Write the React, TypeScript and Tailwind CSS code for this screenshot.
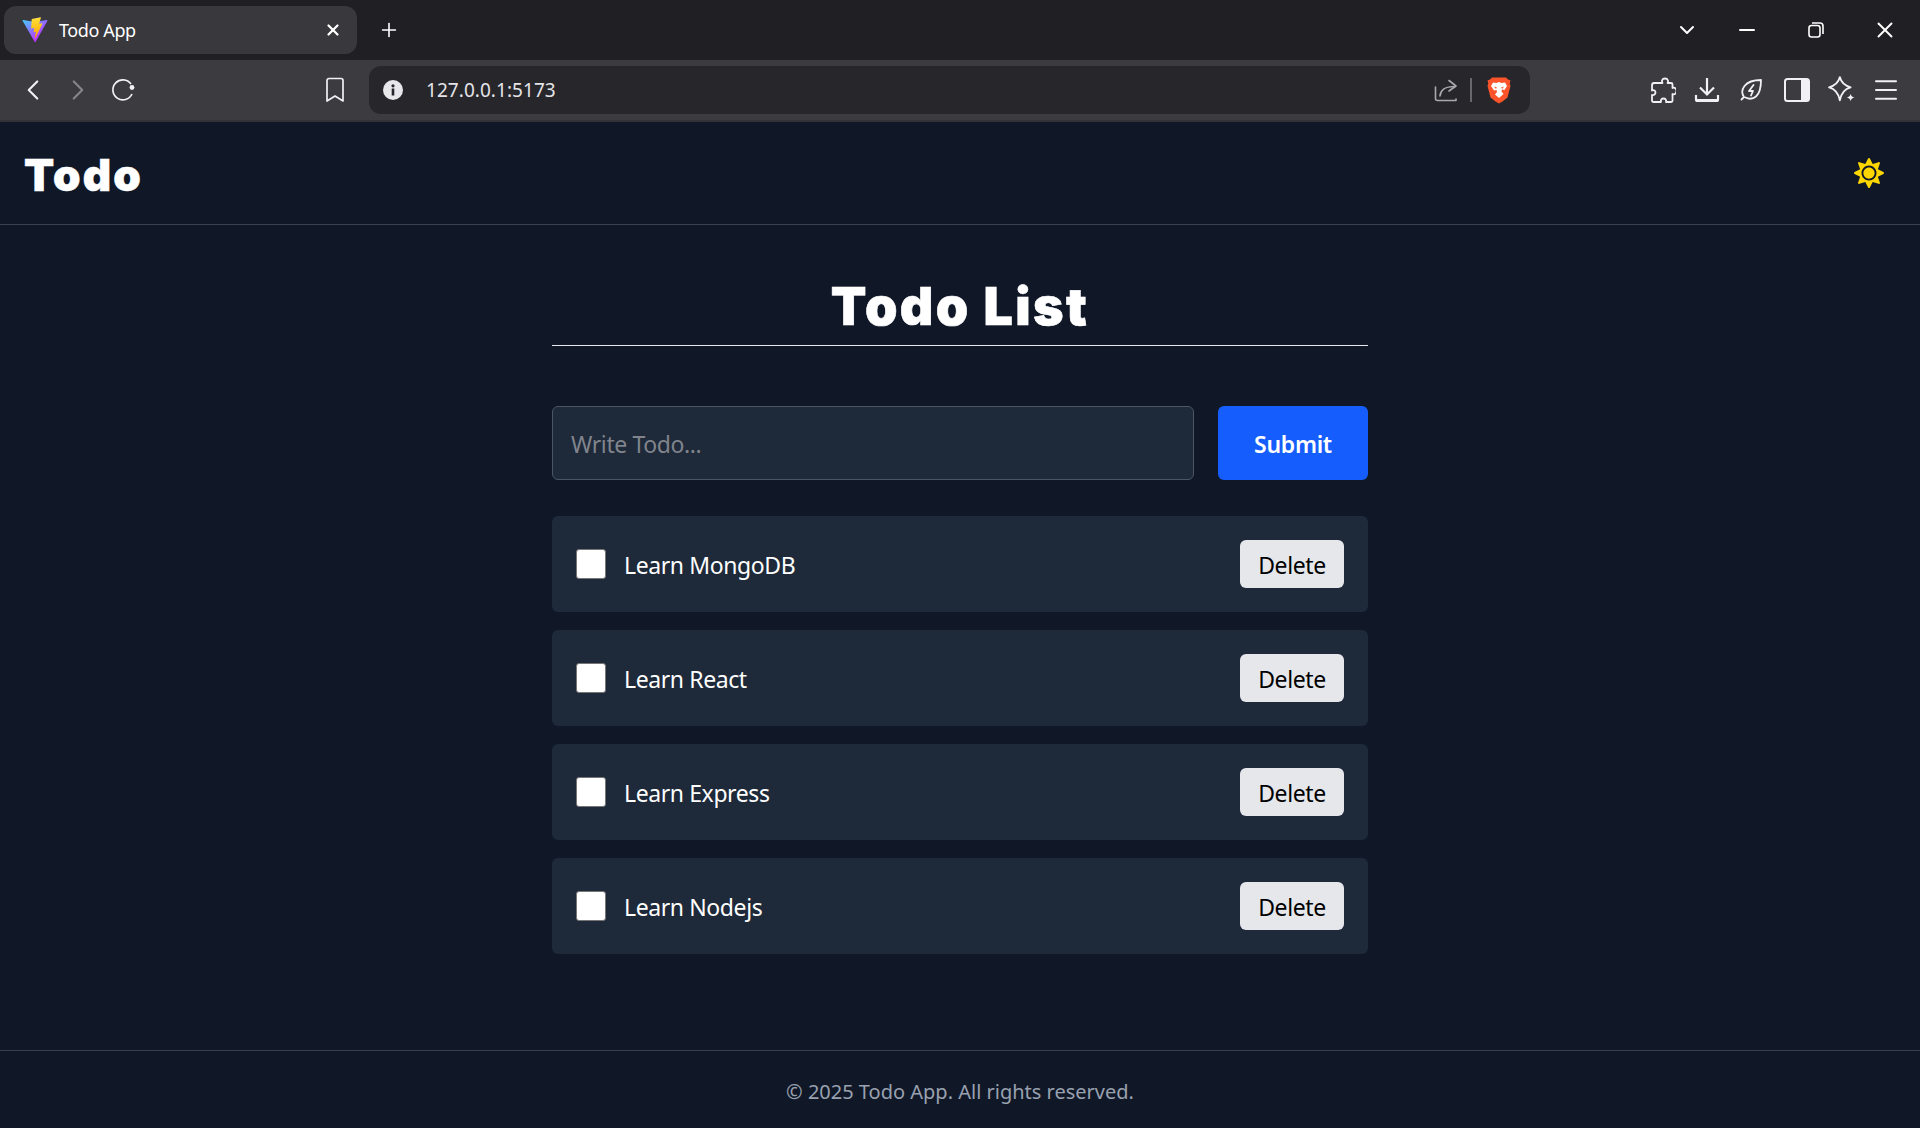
import React from 'react';
import { FaSun } from 'react-icons/fa';
import { ChevronLeft, ChevronRight, Plus, X, ChevronDown, Minus, Menu } from 'lucide-react';

const todos = ['Learn MongoDB', 'Learn React', 'Learn Express', 'Learn Nodejs'];

function ViteLogo() {
  return (
    <svg width="26" height="26" viewBox="0 0 410 404" fill="none">
      <path d="M399.6 59.5 215.9 388.2c-3.8 6.8-13.5 6.8-17.4.1L11.2 59.5c-4.2-7.4 2.1-16.3 10.4-14.8l183.9 32.9c1.2.2 2.4.2 3.5 0l180-32.8c8.3-1.5 14.7 7.3 10.6 14.7Z" fill="url(#viteA)" />
      <path d="M292.9 1.6 156.9 28.2c-2.2.4-3.9 2.3-4 4.6l-8.4 141.2c-.2 3.3 2.8 5.9 6.1 5.1l37.9-8.7c3.5-.8 6.7 2.3 6 5.9l-11.3 55.1c-.8 3.7 2.7 6.9 6.3 5.8l23.4-7.1c3.6-1.1 7.1 2.1 6.3 5.8l-17.9 86.6c-1.1 5.4 6.1 8.4 9.1 3.7l2-3.1 110.8-221.1c1.9-3.7-1.3-7.9-5.4-7.1l-39 7.5c-3.7.7-6.8-2.7-5.8-6.3l25.4-88.2c1-3.7-2.1-7.1-5.8-6.4Z" fill="url(#viteB)" />
      <defs>
        <linearGradient id="viteA" x1="6.6" y1="33.7" x2="235" y2="344" gradientUnits="userSpaceOnUse">
          <stop stopColor="#41D1FF" />
          <stop offset="1" stopColor="#BD34FE" />
        </linearGradient>
        <linearGradient id="viteB" x1="194.6" y1="8.8" x2="236" y2="292.9" gradientUnits="userSpaceOnUse">
          <stop stopColor="#FFEA83" />
          <stop offset="0.08" stopColor="#FFDD35" />
          <stop offset="1" stopColor="#FFA800" />
        </linearGradient>
      </defs>
    </svg>
  );
}

function BraveLogo() {
  return (
    <svg width="24" height="27" viewBox="0 0 24 27">
      <path d="M5 0.5h14l2 2 2.500 1-0.800 3 0.800 2.500-3 11.500-5 4-3.500 2-3.500-2-5-4L0.500 9l0.800-2.500L0.500 3.500 3 2.500z" fill="#fb542b" />
      <path d="M6 5.500l3.500 .5 2.500-1 2.500 1 3.500-.5 2 3.500-2.500 4-2.500-.5-.5 2 2 2.500L12 21l-4-3.500 2-2.500-.5-2-2.500.5L4 9z" fill="#fff" />
      <path d="M7.500 9.500l3 1.500-2.500 .5zM16.500 9.500l-3 1.500 2.500 .5z" fill="#fb542b" />
    </svg>
  );
}

function ToolIcon({ children }: { children: React.ReactNode }) {
  return <div className="w-[44.6px] h-[60px] flex items-center justify-center text-[#f1f1f3]">{children}</div>;
}

function BrowserChrome() {
  return (
    <div className="font-['Noto_Sans',sans-serif]">
      <div className="h-[60px] bg-[#1f1f24] flex items-start text-white">
        <div className="mt-[6px] ml-1 w-[353px] h-[48px] rounded-xl bg-[#38383d] flex items-center pl-[18px] pr-[15px]">
          <ViteLogo />
          <span className="ml-[11px] text-[18px] tracking-[-0.4px]">Todo App</span>
          <X size={18} strokeWidth={3} className="ml-auto" />
        </div>
        <Plus size={22} strokeWidth={1.75} className="ml-[21px] mt-[19px]" />
        <ChevronDown size={24} strokeWidth={2} className="ml-auto mt-[18px]" />
        <Minus size={24} strokeWidth={2} className="ml-[36px] mt-[18px]" />
        <svg width="16" height="16" viewBox="0 0 16 16" fill="none" stroke="white" strokeWidth="1.6" className="ml-[49px] mt-[22px]">
          <rect x="1" y="3.500" width="11" height="11.500" rx="2.500" />
          <path d="M4 1h8a3 3 0 0 1 3 3v8" />
        </svg>
        <X size={26} strokeWidth={1.75} className="ml-[48px] mt-[17px] mr-[22px]" />
      </div>
      <div className="h-[62px] bg-[#3b3b40] border-b-2 border-[#323237] flex items-center pl-[11px] text-[#f1f1f3]">
        <div className="w-[44px] flex justify-center"><ChevronLeft size={34} strokeWidth={1.5} /></div>
        <div className="w-[45px] flex justify-center text-[#85858a]"><ChevronRight size={34} strokeWidth={1.5} /></div>
        <div className="w-[44px] flex justify-center">
          <svg width="26" height="26" viewBox="0 0 26 26" fill="none" stroke="currentColor" strokeWidth="1.7" className="ml-[2px]">
            <path d="M22 17a10 10 0 1 1-1-10" />
            <circle cx="22" cy="10.500" r="2.400" fill="currentColor" stroke="none" />
          </svg>
        </div>
        <svg width="20" height="26" viewBox="0 0 20 26" fill="none" stroke="currentColor" strokeWidth="1.7" className="ml-[181px]">
          <path d="M2 3.500A2 2 0 0 1 4 1.500h12a2 2 0 0 1 2 2V24l-8-5-8 5z" strokeLinejoin="round" />
        </svg>
        <div className="ml-[24px] w-[1161px] h-[48px] rounded-xl bg-[#26262b] flex items-center pl-[14px]">
          <svg width="20" height="20" viewBox="0 0 20 20">
            <circle cx="10" cy="10" r="10" fill="#e8e8ea" />
            <rect x="8.700" y="8.500" width="2.600" height="7" fill="#26262b" />
            <circle cx="10" cy="5.800" r="1.600" fill="#26262b" />
          </svg>
          <span className="ml-[23px] text-[19px] tracking-[0.05px] text-[#e4e4e7]">127.0.0.1:5173</span>
          <svg width="24" height="24" viewBox="0 0 24 24" fill="none" stroke="#a9a9ad" strokeWidth="1.6" strokeLinecap="round" strokeLinejoin="round" className="ml-auto">
            <path d="M1.500 9v11.500a2 2 0 0 0 2 2h18.500V21" />
            <path d="M6 18c.5-6 4-9.500 15-9.500" />
            <path d="M15 2.500l7 5.500-7 5" />
          </svg>
          <div className="ml-[12px] w-[2px] h-[24px] bg-[#67676c]" />
          <div className="ml-[15px] mr-[19px] flex"><BraveLogo /></div>
        </div>
        <div className="ml-[111px] flex">
          <ToolIcon>
            <svg width="26" height="26" viewBox="0 0 26 26" fill="none" stroke="currentColor" strokeWidth="1.8" strokeLinejoin="round">
              <path d="M9 6h3.500c-1-1.500-.8-4.500 2.500-4.500S18.500 4.500 17.500 6H21a1.500 1.500 0 0 1 1.500 1.500V11c2-1 4 .5 4 3s-2 4-4 3v6.500A1.500 1.500 0 0 1 21 25h-5c.5-2-.5-3.500-2.500-3.500S10.500 23 11 25H3.500A1.500 1.500 0 0 1 2 23.500V18c2 .5 3.500-1 3.500-2.500S4 12.500 2 13.500V8.500C2 7 3 6 4 6z" />
            </svg>
          </ToolIcon>
          <ToolIcon>
            <svg width="26" height="26" viewBox="0 0 26 26" fill="none" stroke="currentColor" strokeWidth="2.2" className="mr-[2px]">
              <path d="M13 1v16M6 10.500l7 7 7-7" />
              <path d="M2 18v4.500a1.500 1.500 0 0 0 1.500 1.500h19a1.500 1.500 0 0 0 1.500-1.500V18" />
              <path d="M2 23.500h22" strokeWidth="3" />
            </svg>
          </ToolIcon>
          <ToolIcon>
            <svg width="24" height="24" viewBox="0 0 24 24" fill="none" stroke="currentColor" strokeWidth="1.8" strokeLinejoin="round" strokeLinecap="round" className="mr-[2px]">
              <path d="M2.500 21.500 5 19c-2-3-2.500-7 .5-11C9 3.500 16 2 22 2c0 6-1 13-5 16.500-3.500 3-7.500 2.500-10.500 1" />
              <path d="M14.500 7 10 13h4l-2 4.500" />
            </svg>
          </ToolIcon>
          <ToolIcon>
            <svg width="26" height="24" viewBox="0 0 26 24">
              <rect x="1" y="1" width="24" height="22" rx="2.500" fill="none" stroke="currentColor" strokeWidth="2" />
              <path d="M17 1h6a2 2 0 0 1 2 2v18a2 2 0 0 1-2 2h-6z" fill="currentColor" />
            </svg>
          </ToolIcon>
          <ToolIcon>
            <svg width="28" height="28" viewBox="0 0 26 26" fill="none" stroke="currentColor" strokeWidth="1.7" strokeLinejoin="round">
              <path d="M11 1c1.200 5 4.500 8 10 9.500-5.500 1.500-8.800 5.500-10 12-1.200-6.500-4.500-10.500-10-12C6.500 9 9.800 6 11 1z" />
              <path d="M21 16.500c.4 2 1.500 3 3.500 3.500-2 .5-3.100 1.500-3.500 3.500-.4-2-1.500-3-3.500-3.500 2-.5 3.100-1.500 3.500-3.500z" fill="currentColor" stroke="none" />
            </svg>
          </ToolIcon>
          <ToolIcon>
            <Menu size={30} strokeWidth={1.6} />
          </ToolIcon>
        </div>
      </div>
    </div>
  );
}

export default function App() {
  return (
    <div className="min-h-screen flex flex-col bg-gray-900 text-white font-['Noto_Sans',sans-serif]">
      <BrowserChrome />
      <nav className="h-[103px] border-b border-gray-700 flex items-center justify-between pl-6 pr-9">
        <h1 className="font-['Inter',sans-serif] text-[44px] leading-none font-black tracking-[2.2px] mt-[4px] [-webkit-text-stroke:0.6px_white]">Todo</h1>
        <FaSun size={30} className="text-[#ffd700] mb-[1px]" />
      </nav>
      <main className="flex-1 w-[816px] mx-auto">
        <h2 className="font-['Inter',sans-serif] mt-[51px] h-[70px] border-b border-gray-200 text-center text-[52px] leading-[62px] font-black tracking-[2.4px] [-webkit-text-stroke:0.6px_white]">Todo List</h2>
        <form className="mt-[60px] flex gap-6">
          <input
            placeholder="Write Todo..."
            className="flex-1 h-[74px] px-[18px] pt-[2px] rounded-md bg-gray-800 border border-gray-600 text-[23px] tracking-[-0.4px] placeholder:text-[#80848c] outline-none"
          />
          <button type="button" className="w-[150px] h-[74px] pt-[2px] rounded-md bg-blue-600 text-[23px] font-semibold tracking-[-0.3px]">Submit</button>
        </form>
        <ul className="mt-[36px] flex flex-col gap-[18px]">
          {todos.map((todo) => (
            <li key={todo} className="h-[96px] rounded-md bg-gray-800 flex items-center pl-6 pr-6">
              <input type="checkbox" className="w-[30px] h-[30px] appearance-none bg-white border border-[#767676] rounded-[3px]" />
              <span className="ml-[18px] text-[23px] tracking-[-0.4px] mt-[2px]">{todo}</span>
              <button type="button" className="ml-auto w-[104px] h-[48px] pt-[2px] rounded-md bg-gray-200 text-black text-[23px] tracking-[-0.4px]">Delete</button>
            </li>
          ))}
        </ul>
      </main>
      <footer className="h-[78px] pt-[4px] border-t border-gray-700 flex items-center justify-center text-[20px] text-gray-400">
        © 2025 Todo App. All rights reserved.
      </footer>
    </div>
  );
}
